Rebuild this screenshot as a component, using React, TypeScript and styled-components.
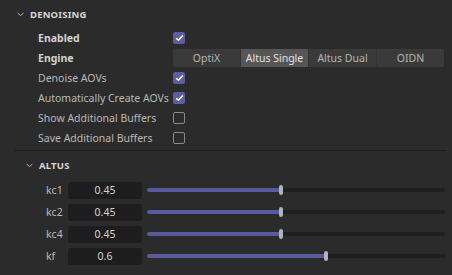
import React, { FC } from 'react';
import styled, { createGlobalStyle } from 'styled-components';

const GlobalStyle = createGlobalStyle`
  html, body {
    margin: 0;
    padding: 0;
    background-color: #2b2b2b;
  }
  body {
    font-family: 'Noto Sans', 'Open Sans', sans-serif;
    font-size: 10.5px;
    color: #bdbdbd;
  }
`;

const Panel = styled.div`
  width: 452px;
  height: 275px;
  background-color: #2b2b2b;
  overflow: hidden;
`;

const Section = styled.div`
  display: flex;
  flex-direction: column;
`;

const Header = styled.div<{ indent: number }>`
  display: flex;
  align-items: center;
  height: 28px;
  padding-left: ${({ indent }) => indent}px;
  gap: 6px;
  font-size: 9.5px;
  font-weight: 700;
  letter-spacing: 0.2px;
  color: #d6d6d6;
`;

const Chevron = styled.svg`
  width: 7px;
  height: 5px;
  flex-shrink: 0;
`;

const Row = styled.div`
  display: grid;
  grid-template-columns: 135px 1fr;
  align-items: center;
  height: 20px;
  padding-left: 38px;
`;

const Label = styled.span<{ strong?: boolean }>`
  font-weight: ${({ strong }) => (strong ? 700 : 400)};
  color: ${({ strong }) => (strong ? '#d2d2d2' : '#b9b9b9')};
  white-space: nowrap;
`;

const Box = styled.div<{ checked: boolean }>`
  width: 12px;
  height: 12px;
  box-sizing: border-box;
  border-radius: 2px;
  background-color: ${({ checked }) => (checked ? '#5d5ca4' : 'transparent')};
  border: ${({ checked }) => (checked ? 'none' : '1.5px solid #8a8a8a')};
  display: flex;
  align-items: center;
  justify-content: center;
`;

const Segments = styled.div`
  display: flex;
  width: 271px;
  height: 18px;
  background-color: #3a3a3a;
  border-radius: 2px;
  overflow: hidden;
`;

const Segment = styled.div<{ active?: boolean }>`
  flex: 1;
  display: flex;
  align-items: center;
  justify-content: center;
  background-color: ${({ active }) => (active ? '#565656' : 'transparent')};
  color: ${({ active }) => (active ? '#e2e2e2' : '#b5b5b5')};
  border-left: 1px solid #333;
  &:first-child {
    border-left: none;
  }
`;

const Divider = styled.div`
  height: 1px;
  margin: 2px 6px 0 14px;
  background-color: #1f1f1f;
`;

const SliderRow = styled.div`
  display: flex;
  align-items: center;
  height: 22px;
  padding-left: 46px;
`;

const SliderLabel = styled.span`
  width: 22px;
  color: #b9b9b9;
`;

const NumberBox = styled.div`
  width: 74px;
  height: 17px;
  border-radius: 3px;
  background-color: #1d1d1d;
  color: #d4d4d4;
  display: flex;
  align-items: center;
  justify-content: center;
  margin-right: 5px;
`;

const Track = styled.div`
  position: relative;
  width: 298px;
  height: 4px;
  border-radius: 2px;
  background-color: #1e1e1e;
`;

const Fill = styled.div`
  height: 100%;
  border-radius: 2px 0 0 2px;
  background-color: #5a5a9f;
`;

const Thumb = styled.div`
  position: absolute;
  top: -3px;
  width: 4px;
  height: 10px;
  margin-left: -2px;
  border-radius: 2px;
  background-color: #b3b3b3;
`;

const ChevronDown: FC = () => (
  <Chevron viewBox="0 0 7 5">
    <path d="M0.5 0.8 L3.5 3.8 L6.5 0.8" fill="none" stroke="#bbbbbb" strokeWidth="1" />
  </Chevron>
);

const Check: FC<{ checked: boolean }> = ({ checked }) => (
  <Box checked={checked}>
    {checked && (
      <svg width="9" height="8" viewBox="0 0 9 8">
        <path d="M1.2 4.2 L3.4 6.2 L7.8 1.6" fill="none" stroke="#ffffff" strokeWidth="1.5" />
      </svg>
    )}
  </Box>
);

const Slider: FC<{ label: string; value: number }> = ({ label, value }) => (
  <SliderRow>
    <SliderLabel>{label}</SliderLabel>
    <NumberBox>{value}</NumberBox>
    <Track>
      <Fill style={{ width: `${value * 100}%` }} />
      <Thumb style={{ left: `${value * 100}%` }} />
    </Track>
  </SliderRow>
);

const options = [
  { label: 'Denoise AOVs', checked: true },
  { label: 'Automatically Create AOVs', checked: true },
  { label: 'Show Additional Buffers', checked: false },
  { label: 'Save Additional Buffers', checked: false },
];

const engines = ['OptiX', 'Altus Single', 'Altus Dual', 'OIDN'];

const sliders = [
  { label: 'kc1', value: 0.45 },
  { label: 'kc2', value: 0.45 },
  { label: 'kc4', value: 0.45 },
  { label: 'kf', value: 0.6 },
];

export default function App() {
  return (
    <>
      <GlobalStyle />
      <Panel>
        <Section>
          <Header indent={17}>
            <ChevronDown />
            DENOISING
          </Header>
          <Row>
            <Label strong>Enabled</Label>
            <Check checked />
          </Row>
          <Row>
            <Label strong>Engine</Label>
            <Segments>
              {engines.map((e) => (
                <Segment key={e} active={e === 'Altus Single'}>{e}</Segment>
              ))}
            </Segments>
          </Row>
          {options.map((o) => (
            <Row key={o.label}>
              <Label>{o.label}</Label>
              <Check checked={o.checked} />
            </Row>
          ))}
        </Section>
        <Divider />
        <Section>
          <Header indent={26}>
            <ChevronDown />
            ALTUS
          </Header>
          {sliders.map((s) => (
            <Slider key={s.label} label={s.label} value={s.value} />
          ))}
        </Section>
      </Panel>
    </>
  );
}
